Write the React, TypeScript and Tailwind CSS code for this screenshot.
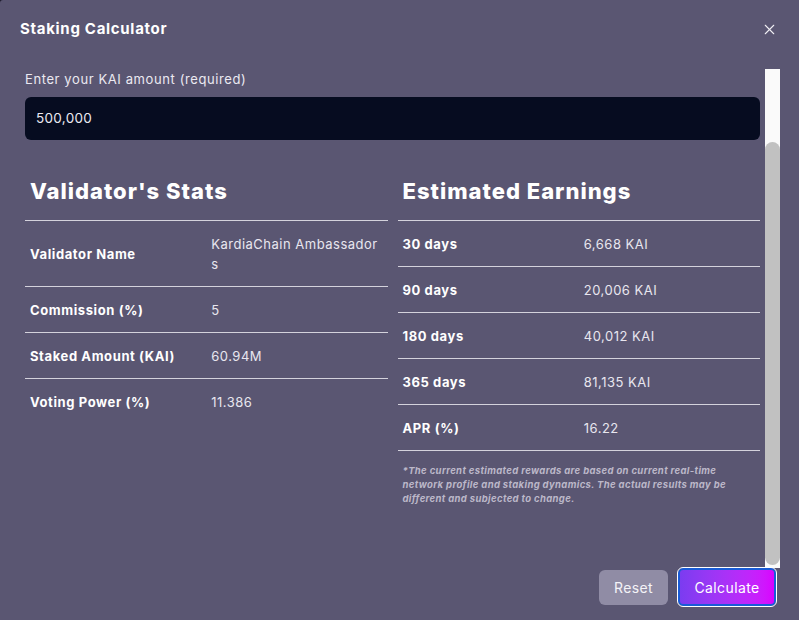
import { X } from "lucide-react";

const stats = [
  { label: "Validator Name", value: "KardiaChain Ambassador", wrap: "s" },
  { label: "Commission (%)", value: "5" },
  { label: "Staked Amount (KAI)", value: "60.94M" },
  { label: "Voting Power (%)", value: "11.386" },
];

const earnings = [
  { label: "30 days", value: "6,668 KAI" },
  { label: "90 days", value: "20,006 KAI" },
  { label: "180 days", value: "40,012 KAI" },
  { label: "365 days", value: "81,135 KAI" },
  { label: "APR (%)", value: "16.22" },
];

const Row = ({ label, value, wrap, last }: { label: string; value: string; wrap?: string; last?: boolean }) => (
  <div className={`grid grid-cols-2 ${last ? "" : "border-b border-[#d4d2dc]"}`}>
    <div className="flex items-center px-[5px] py-[12.5px] text-[13px] leading-5 font-bold text-white tracking-[0.6px]">{label}</div>
    <div className="flex flex-col justify-center px-[5px] py-[12.5px] text-[13px] leading-5 text-[#e8e6ef] tracking-[0.5px]">
      <span className="whitespace-nowrap">{value}</span>
      {wrap && <span>{wrap}</span>}
    </div>
  </div>
);

const App = () => {
  return (
    <div className="w-[799px] h-[620px] bg-[#1c1a2b]">
      <div className="w-full h-full bg-[#5a5672] rounded-tl-[3px] flex flex-col text-white" style={{ fontFamily: "Inter, 'Noto Sans', sans-serif" }}>
        <div className="flex items-center justify-between pl-[20px] pr-[21px] h-[58px]">
          <div className="text-[15px] font-bold tracking-[0.7px]">Staking Calculator</div>
          <X size={17} strokeWidth={1.5} className="text-[#f0eff4]" />
        </div>

        <div className="flex h-[499px] ml-[25px] mr-[19px] mt-[11px] gap-[5px]">
          <div className="flex-1 overflow-hidden">
            <div className="text-[13px] leading-5 text-[#ebe9f1] tracking-[0.6px]">Enter your KAI amount (required)</div>
            <div className="mt-[8px] h-[43px] rounded-[6px] bg-[#060c20] flex items-center px-[11px] text-[13.5px] tracking-[0.3px] text-[#eceaf2]">500,000</div>

            <div className="grid grid-cols-2 gap-[10px] mt-[36px]">
              <div>
                <div className="px-[5px] h-[30px] text-[22px] leading-[30px] font-extrabold tracking-[1px] mb-[14px]">Validator's Stats</div>
                <div className="border-t border-[#d4d2dc]">
                  {stats.map((s, i) => (
                    <Row key={s.label} label={s.label} value={s.value} wrap={s.wrap} last={i === stats.length - 1} />
                  ))}
                </div>
              </div>
              <div>
                <div className="px-[5px] h-[30px] text-[22px] leading-[30px] font-extrabold tracking-[1px] mb-[14px]">Estimated Earnings</div>
                <div className="border-t border-[#d4d2dc]">
                  {earnings.map((e) => (
                    <Row key={e.label} label={e.label} value={e.value} />
                  ))}
                </div>
                <p className="mt-[13px] px-[5px] text-[9.5px] leading-[14px] font-bold italic tracking-[0.35px] text-[#bcb8c9]">
                  *The current estimated rewards are based on current real-time
                  <br />
                  network profile and staking dynamics. The actual results may be
                  <br />
                  different and subjected to change.
                </p>
              </div>
            </div>
          </div>

          <div className="w-[15px] bg-[#fafafa] flex justify-center pt-[73px] pb-[3px]">
            <div className="w-[8px] flex-1 rounded-full bg-[#c1c1c1]" />
          </div>
        </div>

        <div className="flex justify-end items-center gap-[10px] pr-[23px]">
          <button className="h-[35px] w-[69px] rounded-[6px] bg-[#908ca5] text-[14px] tracking-[0.4px] text-[#f4f3f7]">Reset</button>
          <button className="h-[38px] w-[98px] rounded-[5px] border-2 border-[#1a5bd6] outline outline-1 outline-white bg-gradient-to-r from-[#7b3cf0] to-[#d900ff] text-[14px] tracking-[0.4px] text-white">
            Calculate
          </button>
        </div>
      </div>
    </div>
  );
};

export default App;
